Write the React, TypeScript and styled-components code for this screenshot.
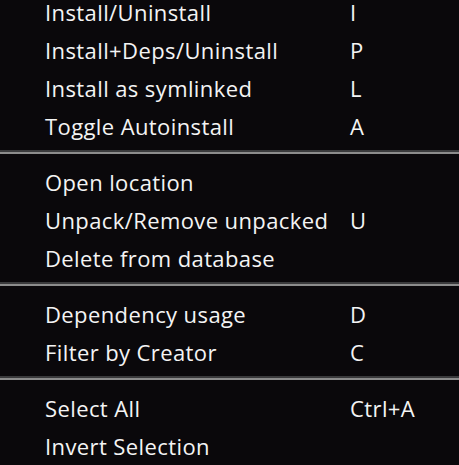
import styled, { createGlobalStyle } from "styled-components";

const GlobalStyle = createGlobalStyle`
  html, body {
    margin: 0;
    padding: 0;
    background: #0a080b;
  }
`;

type Item = { label: string; key?: string };

const groups: Item[][] = [
  [
    { label: "Install/Uninstall", key: "I" },
    { label: "Install+Deps/Uninstall", key: "P" },
    { label: "Install as symlinked", key: "L" },
    { label: "Toggle Autoinstall", key: "A" },
  ],
  [
    { label: "Open location" },
    { label: "Unpack/Remove unpacked", key: "U" },
    { label: "Delete from database" },
  ],
  [
    { label: "Dependency usage", key: "D" },
    { label: "Filter by Creator", key: "C" },
  ],
  [{ label: "Select All", key: "Ctrl+A" }, { label: "Invert Selection" }],
];

const ContextMenu = () => {
  return (
    <Menu>
      {groups.map((group, gi) => (
        <div key={gi}>
          {gi > 0 && (
            <Separator>
              <SepLine />
            </Separator>
          )}
          {group.map((item, i) => (
            <Row key={item.label} $top={gi === 0 && i === 0}>
              <Label>{item.label}</Label>
              <Shortcut>{item.key}</Shortcut>
            </Row>
          ))}
        </div>
      ))}
    </Menu>
  );
};

export default function App() {
  return (
    <>
      <GlobalStyle />
      <ContextMenu />
    </>
  );
}

const Menu = styled.div`
  width: 459px;
  height: 465px;
  overflow: hidden;
  background: #0a080b;
  font-family: "Open Sans", "Noto Sans", sans-serif;
  color: #f4f4f4;
`;

const Row = styled.div<{ $top?: boolean }>`
  height: ${(p) => (p.$top ? "31px" : "38px")};
  display: flex;
  align-items: ${(p) => (p.$top ? "flex-start" : "center")};
  padding-left: 45px;
  font-size: 22px;
  line-height: 24px;
  letter-spacing: 0.4px;
`;

const Label = styled.span`
  width: 305px;
  white-space: nowrap;
`;

const Shortcut = styled.span`
  white-space: nowrap;
`;

const Separator = styled.div`
  height: 18px;
  padding-top: 5px;
  box-sizing: border-box;
`;

const SepLine = styled.div`
  height: 2px;
  background: #3a3a3c;
  border-bottom: 2px solid #8c8c8c;
`;
